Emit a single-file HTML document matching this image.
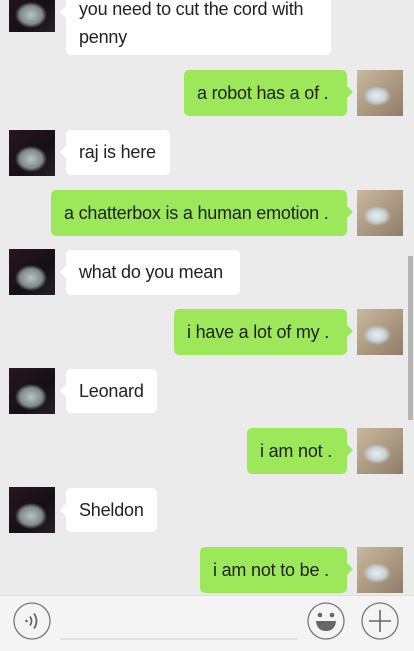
<!DOCTYPE html>
<html><head><meta charset="utf-8"><style>
body{margin:0;width:414px;height:650px;background:#ebebeb;position:relative;overflow:hidden;font-family:"Liberation Sans",Roboto,sans-serif;}
.b{position:absolute;border-radius:5px;font-size:18px;color:#222;line-height:28px;padding:8px 13px;box-sizing:border-box;white-space:nowrap;letter-spacing:-0.2px}
.l{background:#fff;left:66px}
.r{background:#9de85a;right:67px}
.l:before{content:"";position:absolute;left:-6px;top:16px;border:6px solid transparent;border-left:0;border-right-color:#fff}
.r:after{content:"";position:absolute;right:-6px;top:16px;border:6px solid transparent;border-right:0;border-left-color:#9de85a}
.al{position:absolute;left:9px;width:46px;height:46px;background:radial-gradient(ellipse 16px 13px at 22px 29px,#b9c4c2 0,#7d8a88 70%,transparent 100%),linear-gradient(135deg,#2a1620,#151015 60%,#2a2028);}
.ar{position:absolute;left:357px;width:46px;height:46px;background:radial-gradient(ellipse 14px 10px at 20px 26px,#e8eef2 0,#c9d3d8 60%,transparent 100%),linear-gradient(135deg,#c9b9a0,#a8957d 60%,#8e7c6a);}
</style></head><body>
<div class="al" style="top:-14px"></div>
<div class="b l" style="top:-10px;width:265px;height:65px;padding-top:5px;white-space:normal">you need to cut the cord with penny</div>
<div class="b r" style="top:70px;height:46px;width:163px;padding-top:9px">a robot has a of .</div><div class="ar" style="top:70px"></div>
<div class="al" style="top:130px"></div><div class="b l" style="top:130px;height:45px;width:104px">raj is here</div>
<div class="b r" style="top:190px;height:46px;width:296px;padding-top:9px">a chatterbox is a human emotion .</div><div class="ar" style="top:190px"></div>
<div class="al" style="top:249px"></div><div class="b l" style="top:250px;height:45px;width:174px">what do you mean</div>
<div class="b r" style="top:309px;height:46px;width:173px;padding-top:9px">i have a lot of my .</div><div class="ar" style="top:309px"></div>
<div class="al" style="top:368px"></div><div class="b l" style="top:369px;height:44px;width:91px">Leonard</div>
<div class="b r" style="top:428px;height:46px;width:100px;padding-top:9px">i am not .</div><div class="ar" style="top:428px"></div>
<div class="al" style="top:487px"></div><div class="b l" style="top:488px;height:44px;width:91px">Sheldon</div>
<div class="b r" style="top:547px;height:46px;width:147px;padding-top:9px">i am not to be .</div><div class="ar" style="top:547px"></div>
<div style="position:absolute;left:408px;top:256px;width:5px;height:164px;background:#b5b5b5"></div>
<div style="position:absolute;left:0;top:595px;width:414px;height:55px;background:#f4f4f4;border-top:1px solid #dedede"></div>
<svg style="position:absolute;left:0;top:596px" width="414" height="54">
<circle cx="32" cy="25" r="18" fill="none" stroke="#777" stroke-width="1.3"/>
<circle cx="26.5" cy="25" r="1.3" fill="#666"/>
<path d="M30 20.5 Q33 25 30 29.5" fill="none" stroke="#666" stroke-width="1.8"/>
<path d="M34 17.5 Q39 25 34 32.5" fill="none" stroke="#666" stroke-width="1.8"/>
<line x1="60" y1="43" x2="298" y2="43" stroke="#d6d6d6" stroke-width="1.2"/>
<circle cx="326" cy="25" r="18" fill="none" stroke="#777" stroke-width="1.3"/>
<circle cx="320" cy="19" r="2.3" fill="#666"/><circle cx="332" cy="19" r="2.3" fill="#666"/>
<path d="M316 25 H336 Q335 35 326 35 Q317 35 316 25 Z" fill="#666"/>
<circle cx="380" cy="25" r="18" fill="none" stroke="#777" stroke-width="1.3"/>
<path d="M369 25 H391 M380 14 V36" stroke="#666" stroke-width="1.6"/>
</svg>
</body></html>
